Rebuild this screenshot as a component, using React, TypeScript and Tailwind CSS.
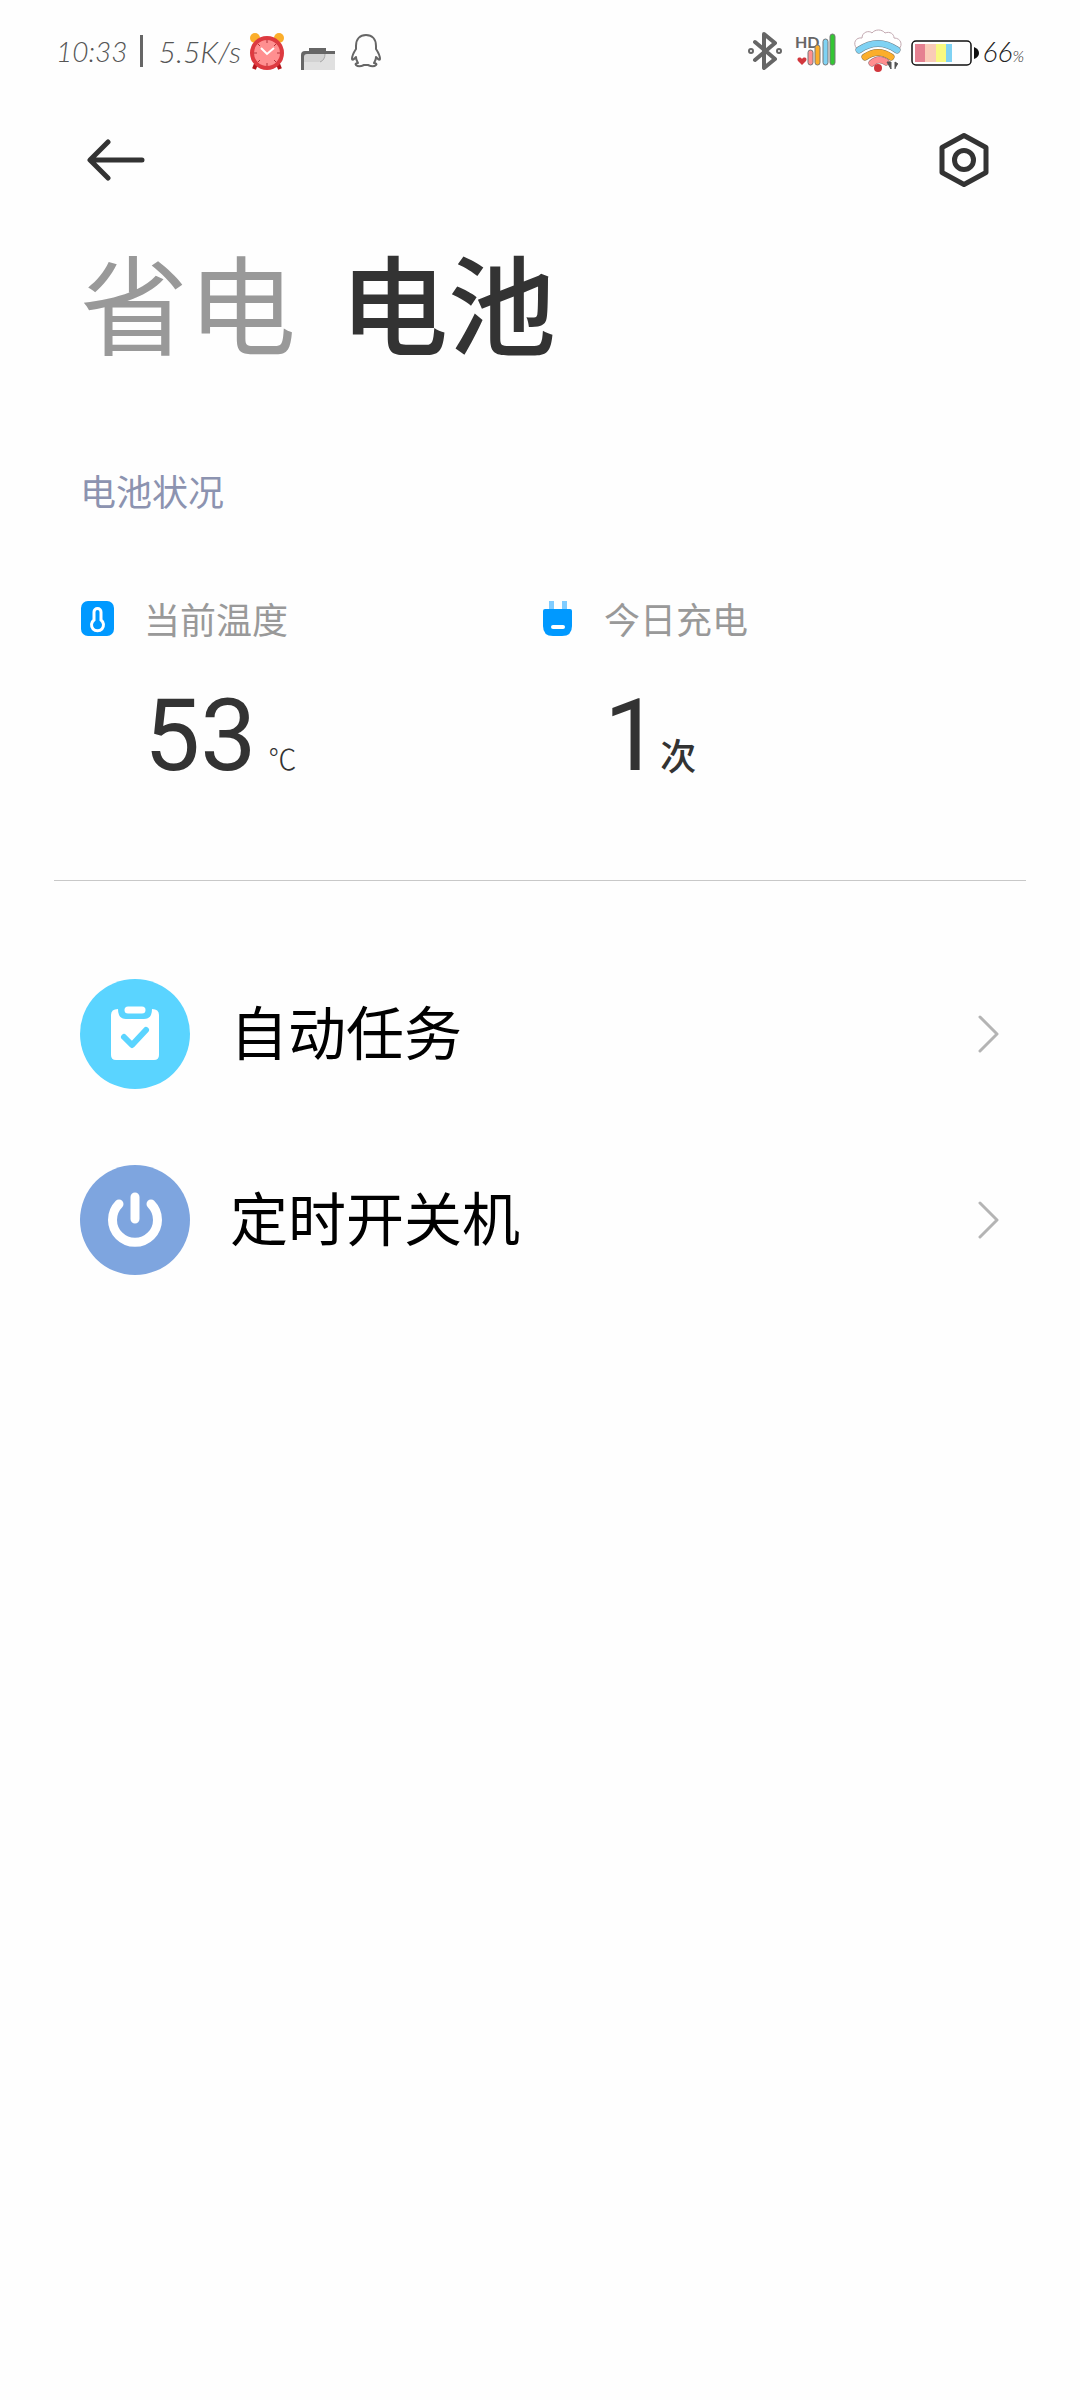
import type { ReactNode } from "react";

function AlarmIcon() {
  return (
    <svg width="36" height="40" viewBox="0 0 36 40" fill="none">
      <circle cx="6" cy="7" r="5" fill="#fbae2b" />
      <circle cx="30" cy="7" r="5" fill="#fbae2b" />
      <path d="M7 33l-2 5M29 33l2 5" stroke="#b3151b" strokeWidth="4" />
      <circle cx="18" cy="22" r="15" fill="#ff8f90" stroke="#dd3a40" strokeWidth="4" />
      <path d="M18 9v3M18 32v3M5 22h3M28 22h3M9 13l2 2M27 13l-2 2M9 31l2-2M27 31l-2-2" stroke="#b3343a" strokeWidth="1" />
      <path d="M12 17l6 6 7-6" stroke="#fff" strokeWidth="2" />
    </svg>
  );
}

function FolderIcon() {
  return (
    <svg width="34" height="22" viewBox="0 0 34 22" fill="none">
      <path d="M3 22V8q0-3 3-3h28v17z" fill="#e0e0e0" />
      <path d="M3 14V5h21q0 9-6 9z" fill="#d2d2d2" />
      <path d="M24 6q0 6-5 8" stroke="#a8a8a8" strokeWidth="1" />
      <path d="M0 22V7q0-4 4-4h4V0h17v3h9v3H6Q3 6 3 9v13z" fill="#666" />
    </svg>
  );
}

function PenguinIcon() {
  return (
    <svg width="30" height="34" viewBox="0 0 30 34" fill="none" stroke="#666" strokeWidth="2" strokeLinejoin="round">
      <path d="M5 12C5 5 9 1 15 1s10 4 10 11v3c2 3 4 7 4 10 0 1-1 1-2 0l-2-2c0 3-1 4-2 6 2 0 3 1 2 2-2 2-6 1-8 0h-4c-2 1-6 2-8 0-1-1 0-2 2-2-1-2-2-3-2-6l-2 2c-1 1-2 1-2 0 0-3 2-7 4-10z" />
    </svg>
  );
}

function BluetoothIcon() {
  return (
    <svg width="36" height="40" viewBox="0 0 36 40" fill="none" stroke="#666" strokeWidth="4" strokeLinejoin="round" strokeLinecap="round">
      <path d="M8 11l20 17-11 9V3l11 9L8 29" />
      <circle cx="4" cy="20" r="1" />
      <circle cx="32" cy="20" r="1" />
    </svg>
  );
}

function SignalIcon() {
  return (
    <svg width="42" height="36" viewBox="0 0 42 36" fill="none">
      <text x="0" y="15" fill="#666" fontSize="16" fontWeight="700" fontStyle="normal" fontFamily="Lato, sans-serif">HD</text>
      <path d="M7 32l-4-4c-2-3 2-5 4-2 2-3 6-1 4 2z" fill="#d2373d" />
      <g stroke="#777" strokeWidth="1">
        <rect x="13" y="17" width="5" height="15" rx="2.5" fill="#ff8f90" />
        <rect x="20" y="12" width="5" height="20" rx="2.5" fill="#fbae2b" />
        <rect x="28" y="6" width="5" height="26" rx="2.5" fill="#7fd2f3" />
        <rect x="35" y="1" width="5" height="31" rx="2.5" fill="#34c634" />
      </g>
    </svg>
  );
}

function WifiIcon() {
  return (
    <svg width="50" height="44" viewBox="0 0 50 44" fill="none">
      <path d="M4 20C-1 14 3 8 9 9c0-6 7-8 10-5 3-4 10-4 13 0 5-2 9 1 9 5 7 0 9 7 5 11" fill="#fff" stroke="#c3a9b1" strokeWidth="1" />
      <path d="M6 21Q25 8 44 21" stroke="#6f7f88" strokeWidth="7" strokeLinecap="round" />
      <path d="M6 21Q25 8 44 21" stroke="#7fd2f3" strokeWidth="6" strokeLinecap="round" />
      <path d="M12 28Q25 19 38 28" stroke="#8b714b" strokeWidth="7" strokeLinecap="round" />
      <path d="M12 28Q25 19 38 28" stroke="#fbae2b" strokeWidth="6" strokeLinecap="round" />
      <path d="M19 34Q26 28 33 33" stroke="#8b6b70" strokeWidth="7" strokeLinecap="round" />
      <path d="M19 34Q26 28 33 33" stroke="#ff8f90" strokeWidth="6" strokeLinecap="round" />
      <circle cx="25" cy="39" r="4" fill="#d2373d" />
      <path d="M34 33h4v7zM42 40v-7l3 2" fill="#555" stroke="#555" strokeWidth="1" />
    </svg>
  );
}

function BatteryIcon() {
  return (
    <svg width="68" height="26" viewBox="0 0 68 26" fill="none">
      <path d="M4 4h10v18H4z" fill="#e58191" />
      <path d="M14 4h11v18H14z" fill="#facbb7" />
      <path d="M25 4h10v18H25z" fill="#f8f980" />
      <path d="M35 4h6v18h-6z" fill="#7fd2f3" />
      <rect x="1" y="1" width="59" height="24" rx="4" stroke="#111" strokeWidth="1.5" />
      <path d="M63 7q5 2 5 6t-5 6z" fill="#111" />
    </svg>
  );
}

function StatusBar() {
  return (
    <div className="flex h-[102px] items-center justify-between pr-14 pl-14 text-[28px] leading-8 font-light text-[#555] italic [font-family:Lato,sans-serif]">
      <div className="flex items-center">
        <span>10:33</span>
        <span className="mr-4 ml-3 h-8 w-[3px] bg-[#666]" />
        <span className="mr-2 text-[30px]">5.5K/s</span>
        <AlarmIcon />
        <span className="mt-4 ml-4"><FolderIcon /></span>
        <span className="ml-4"><PenguinIcon /></span>
      </div>
      <div className="flex items-center">
        <BluetoothIcon />
        <span className="ml-3"><SignalIcon /></span>
        <span className="ml-4"><WifiIcon /></span>
        <span className="mt-1 ml-2"><BatteryIcon /></span>
        <span className="ml-1 text-[#222]">66<span className="text-base">%</span></span>
      </div>
    </div>
  );
}

function ThermometerIcon() {
  return (
    <svg width="36" height="36" viewBox="0 0 36 36" fill="none">
      <rect x="1" y="1" width="33" height="35" rx="7" fill="#0099ff" />
      <path d="M14 12a3.500 3.500 0 0 1 7 0v8a6 6 0 1 1-7 0z" stroke="#fff" strokeWidth="3" />
    </svg>
  );
}

function PlugIcon() {
  return (
    <svg width="36" height="36" viewBox="0 0 36 36" fill="none">
      <path d="M9 1h5v9H9zM22 1h5v9h-5z" fill="#80ccff" />
      <path d="M3 11q0-2 2-2h25q2 0 2 2v15q0 10-10 10h-9Q3 36 3 26z" fill="#0099ff" />
      <path d="M13 27h10" stroke="#fff" strokeWidth="4" strokeLinecap="round" />
    </svg>
  );
}

function TaskIcon() {
  return (
    <svg width="110" height="110" viewBox="0 0 110 110" fill="none">
      <circle cx="55" cy="55" r="55" fill="#5ad4ff" />
      <path d="M38 30q-7 0-7 6v40q0 5 5 5h38q5 0 5-5V36q0-6-7-6 0 10-8 10H46q-8 0-8-10z" fill="#fff" />
      <path d="M48 31h14" stroke="#fff" strokeWidth="7" strokeLinecap="round" />
      <path d="M44 58l8 8 14-15" stroke="#5ad4ff" strokeWidth="6" strokeLinecap="round" strokeLinejoin="round" />
    </svg>
  );
}

function PowerIcon() {
  return (
    <svg width="110" height="110" viewBox="0 0 110 110" fill="none">
      <circle cx="55" cy="55" r="55" fill="#7ea5df" />
      <path d="M39 39a22.500 22.500 0 1 0 32 0M55 32v22" stroke="#fff" strokeWidth="9" strokeLinecap="round" />
    </svg>
  );
}

type StatProps = { icon: ReactNode; label: string; value: string; unit: ReactNode };

function Stat({ icon, label, value, unit }: StatProps) {
  return (
    <div>
      <div className="flex items-center gap-7">
        {icon}
        <h3 className="text-4xl leading-[48px] text-[#999]">{label}</h3>
      </div>
      <p className="mt-[38px] flex items-baseline pl-16 text-[#333]">
        <span className="text-[100px] leading-[112px] [font-family:Roboto,sans-serif]">{value}</span>
        {unit}
      </p>
    </div>
  );
}

function MenuRow({ icon, label }: { icon: ReactNode; label: string }) {
  return (
    <a href="#" className="flex h-[186px] items-center pr-20 pl-20">
      {icon}
      <span className="ml-10 flex-1 pb-2 text-[58px] leading-[72px] text-black">{label}</span>
      <svg width="22" height="38" viewBox="0 0 22 38" fill="none" stroke="#b4b4b4" strokeWidth="3" strokeLinecap="round" strokeLinejoin="round">
        <path d="M2 2l17 17L2 36" />
      </svg>
    </a>
  );
}

export default function App() {
  return (
    <div className="min-h-screen bg-[#fefefe] [font-family:'Noto_Sans_CJK_SC',sans-serif]">
      <StatusBar />
      <header className="flex h-[116px] items-center justify-between px-[86px]">
        <button type="button" aria-label="返回">
          <svg width="60" height="42" viewBox="0 0 60 42" fill="none" stroke="#333" strokeWidth="5" strokeLinecap="round" strokeLinejoin="round">
            <path d="M22 3L4 21l18 18M6 21h50" />
          </svg>
        </button>
        <button type="button" aria-label="设置">
          <svg width="60" height="60" viewBox="0 0 60 60" fill="none" stroke="#333" strokeWidth="5" strokeLinejoin="round">
            <path d="M30 5.500L52 17.500v25L30 54.500 8 42.500v-25z" />
            <circle cx="30" cy="30" r="9.500" />
          </svg>
        </button>
      </header>
      <nav className="flex h-[172px] items-center gap-11 px-20 pb-2 text-[108px] leading-[120px]">
        <button type="button" className="text-[#999]">省电</button>
        <button type="button" className="font-medium text-[#333]">电池</button>
      </nav>
      <main>
        <h2 className="mt-[76px] px-20 text-4xl leading-[48px] text-[#8c93b0]">电池状况</h2>
        <section className="mt-20 grid grid-cols-2 px-20">
          <Stat
            icon={<ThermometerIcon />}
            label="当前温度"
            value="53"
            unit={<span className="ml-3 text-[28px] font-light">℃</span>}
          />
          <Stat
            icon={<PlugIcon />}
            label="今日充电"
            value="1"
            unit={<span className="text-4xl font-medium">次</span>}
          />
        </section>
        <hr className="mx-[54px] mt-[88px] mb-[60px] border-[#c8c8c8]" />
        <MenuRow icon={<TaskIcon />} label="自动任务" />
        <MenuRow icon={<PowerIcon />} label="定时开关机" />
      </main>
    </div>
  );
}
